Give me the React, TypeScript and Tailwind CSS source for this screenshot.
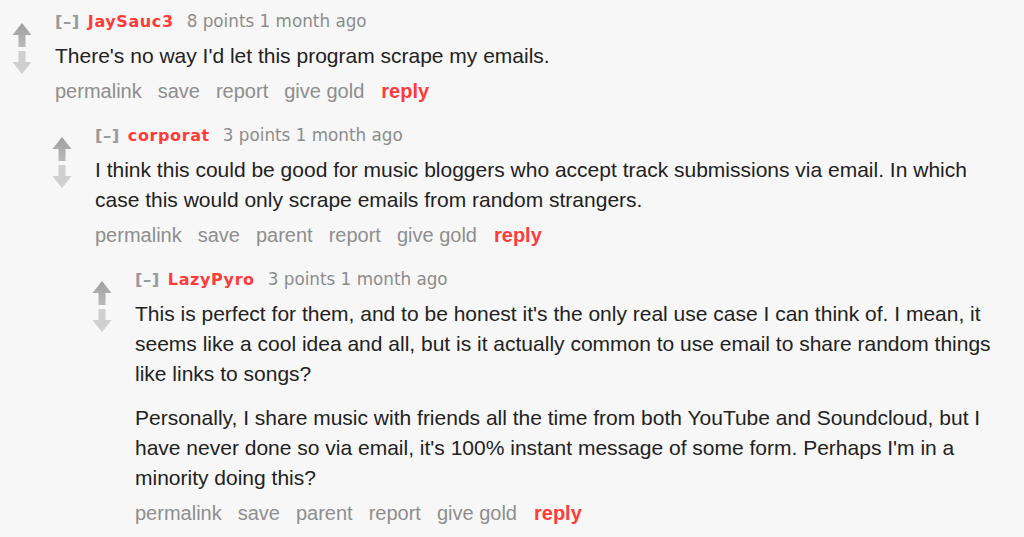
import React from "react";

type C = {
  user: string;
  points: string;
  paras: string[];
  parent?: boolean;
  children?: C[];
};

const data: C = {
  user: "JaySauc3",
  points: "8 points",
  paras: ["There's no way I'd let this program scrape my emails."],
  children: [
    {
      user: "corporat",
      points: "3 points",
      parent: true,
      paras: [
        "I think this could be good for music bloggers who accept track submissions via email. In which case this would only scrape emails from random strangers.",
      ],
      children: [
        {
          user: "LazyPyro",
          points: "3 points",
          parent: true,
          paras: [
            "This is perfect for them, and to be honest it's the only real use case I can think of. I mean, it seems like a cool idea and all, but is it actually common to use email to share random things like links to songs?",
            "Personally, I share music with friends all the time from both YouTube and Soundcloud, but I have never done so via email, it's 100% instant message of some form. Perhaps I'm in a minority doing this?",
          ],
        },
      ],
    },
  ],
};

function Arrows() {
  return (
    <svg width="20" height="52" viewBox="0 0 20 52" className="block">
      <defs>
        <linearGradient id="upg" x1="0" y1="0" x2="0" y2="1">
          <stop offset="0" stopColor="#9f9f9f" />
          <stop offset="1" stopColor="#b9b9b9" />
        </linearGradient>
      </defs>
      <polygon points="10,0 19.5,12 13.5,12 13.5,24 6.5,24 6.5,12 0.5,12" fill="url(#upg)" />
      <polygon points="6.5,28 13.5,28 13.5,39 19.5,39 10,51 0.5,39 6.5,39" fill="#cfcfcf" />
    </svg>
  );
}

function Comment({ c, first }: { c: C; first?: boolean }) {
  return (
    <div className={first ? "" : "mt-[20px]"}>
      <div className="flex">
        <div className="w-[43px] shrink-0 pt-[14px]">
          <Arrows />
        </div>
        <div className="flex-1 min-w-0">
          <div className="flex items-baseline h-[24px] leading-[24px] font-['DejaVu_Sans',sans-serif] text-[#8c8c8c] whitespace-nowrap">
            <span className="text-[16.5px] font-bold text-[#999] tracking-[0.5px]">[–]</span>
            <span className="ml-[8px] text-[16px] font-bold text-[#ff3b3b] tracking-[0.6px]">{c.user}</span>
            <span className="ml-[13px] text-[16.8px]">{c.points} 1 month ago</span>
          </div>
          <div className="mt-[8px] font-['Liberation_Sans',Arial,sans-serif] text-[21px] leading-[30px] text-[#222]">
            {c.paras.map((p, i) => (
              <p key={i} className={i > 0 ? "mt-[14px]" : ""}>
                {p}
              </p>
            ))}
          </div>
          <div className="mt-[8px] flex items-baseline gap-[16px] h-[24px] leading-[24px] font-['Liberation_Sans',Arial,sans-serif] text-[20px] text-[#8e8e8e] whitespace-nowrap">
            <span>permalink</span>
            <span>save</span>
            {c.parent && <span>parent</span>}
            <span>report</span>
            <span>give gold</span>
            <span className="ml-[1px] font-bold text-[#ff3b3b]">reply</span>
          </div>
        </div>
      </div>
      {c.children && (
        <div className="ml-[40px]">
          {c.children.map((ch, i) => (
            <Comment key={i} c={ch} />
          ))}
        </div>
      )}
    </div>
  );
}

export default function App() {
  return (
    <div className="w-[1024px] h-[537px] overflow-hidden bg-[#f7f7f7] pl-[12px] pr-[14px] pt-[9px]">
      <Comment c={data} first />
    </div>
  );
}
